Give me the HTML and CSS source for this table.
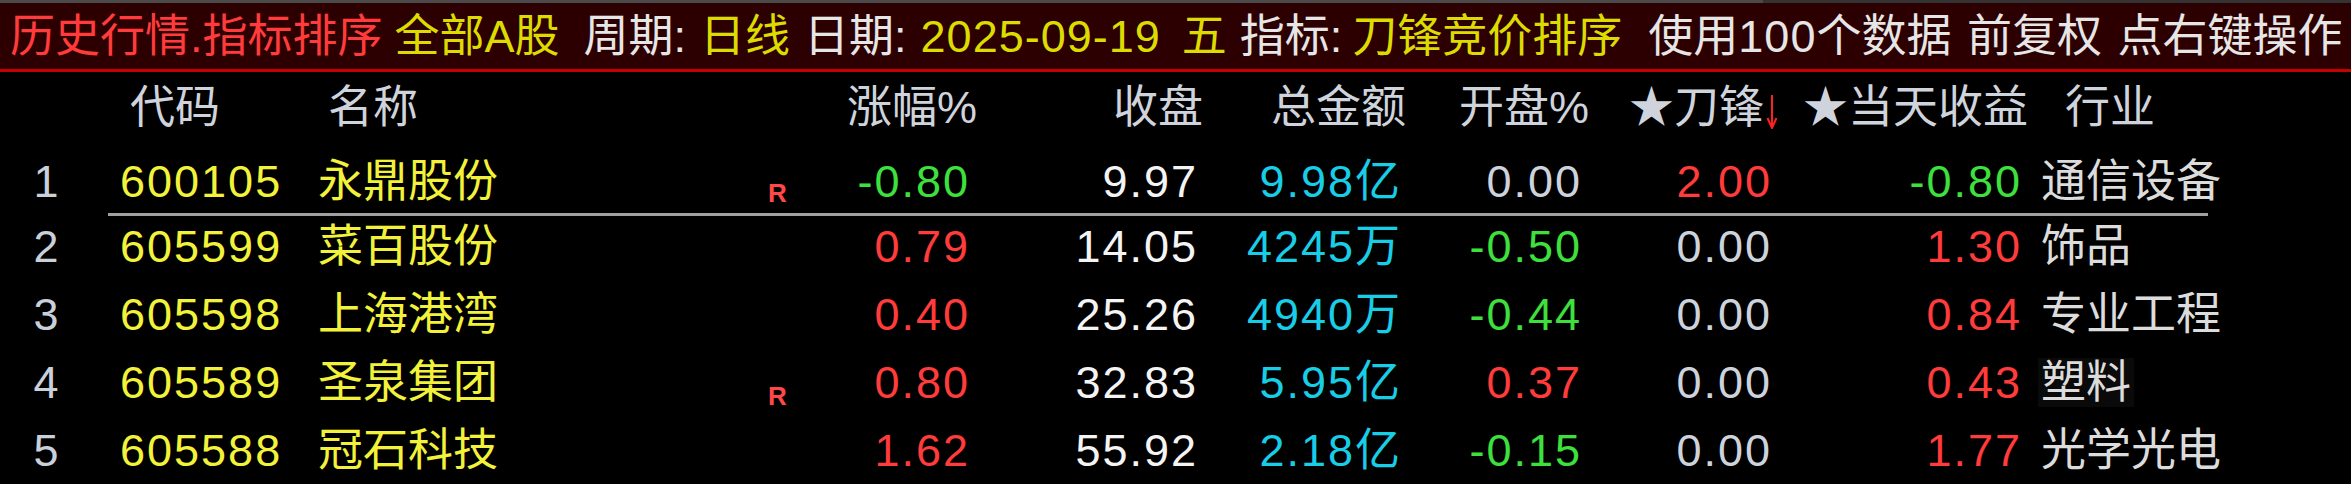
FILE: index.html
```html
<!DOCTYPE html>
<html lang="zh-CN">
<head>
<meta charset="utf-8">
<title>历史行情.指标排序</title>
<link rel="stylesheet" href="styles.css">
</head>
<body>
<div class="app">
  <div class="topstrip"></div>
  <div class="titlebar">
    <span class="t-red">历史行情.指标排序</span>
    <span class="t-yel seg-market">全部A股</span>
    <span class="t-wht seg-period-label">周期:</span>
    <span class="t-yel seg-period">日线</span>
    <span class="t-wht seg-date-label">日期:</span>
    <span class="t-yel t-num seg-date">2025-09-19</span>
    <span class="t-yel seg-week">五</span>
    <span class="t-wht seg-ind-label">指标:</span>
    <span class="t-yel seg-ind">刀锋竞价排序</span>
    <span class="t-wht seg-tail">使用<span class="t-num">100</span>个数据 前复权 点右键操作</span>
  </div>

  <div class="hrow">
    <span></span>
    <span class="h-code">代码</span>
    <span class="h-name">名称</span>
    <span></span>
    <span class="h-num">涨幅%</span>
    <span class="h-num">收盘</span>
    <span class="h-num">总金额</span>
    <span class="h-num">开盘%</span>
    <span class="h-num">★刀锋<svg class="sort-arrow" width="12" height="34" viewBox="0 0 12 34"><line x1="6" y1="0" x2="6" y2="31" stroke="#ff2020" stroke-width="2"/><path d="M1.5 23 L6 33 L10.5 23" fill="none" stroke="#ff2020" stroke-width="2"/></svg></span>
    <span class="h-num">★当天收益</span>
    <span class="h-ind">行业</span>
  </div>

  <div class="row row-first">
    <span class="idx">1</span>
    <span class="code">600105</span>
    <span class="name">永鼎股份</span>
    <span class="mark">R</span>
    <span class="num green">-0.80</span>
    <span class="num white">9.97</span>
    <span class="num cyan">9.98亿</span>
    <span class="num gray">0.00</span>
    <span class="num red">2.00</span>
    <span class="num green">-0.80</span>
    <span class="ind">通信设备</span>
  </div>
  <div class="sep"></div>

  <div class="row row-second">
    <span class="idx">2</span>
    <span class="code">605599</span>
    <span class="name">菜百股份</span>
    <span class="mark"></span>
    <span class="num red">0.79</span>
    <span class="num white">14.05</span>
    <span class="num cyan">4245万</span>
    <span class="num green">-0.50</span>
    <span class="num gray">0.00</span>
    <span class="num red">1.30</span>
    <span class="ind">饰品</span>
  </div>

  <div class="row">
    <span class="idx">3</span>
    <span class="code">605598</span>
    <span class="name">上海港湾</span>
    <span class="mark"></span>
    <span class="num red">0.40</span>
    <span class="num white">25.26</span>
    <span class="num cyan">4940万</span>
    <span class="num green">-0.44</span>
    <span class="num gray">0.00</span>
    <span class="num red">0.84</span>
    <span class="ind">专业工程</span>
  </div>

  <div class="row">
    <span class="idx">4</span>
    <span class="code">605589</span>
    <span class="name">圣泉集团</span>
    <span class="mark">R</span>
    <span class="num red">0.80</span>
    <span class="num white">32.83</span>
    <span class="num cyan">5.95亿</span>
    <span class="num red">0.37</span>
    <span class="num gray">0.00</span>
    <span class="num red">0.43</span>
    <span class="ind ind-hl">塑料</span>
  </div>

  <div class="row">
    <span class="idx">5</span>
    <span class="code">605588</span>
    <span class="name">冠石科技</span>
    <span class="mark"></span>
    <span class="num red">1.62</span>
    <span class="num white">55.92</span>
    <span class="num cyan">2.18亿</span>
    <span class="num green">-0.15</span>
    <span class="num gray">0.00</span>
    <span class="num red">1.77</span>
    <span class="ind">光学光电</span>
  </div>
</div>
</body>
</html>
```

FILE: styles.css
```css
* { box-sizing: border-box; }

html, body {
  margin: 0;
  padding: 0;
  background: #000;
}

body {
  width: 2351px;
  height: 484px;
  overflow: hidden;
  font-family: "Liberation Sans", "Noto Sans CJK SC", sans-serif;
  font-size: 45px;
  line-height: 1;
}

.app {
  display: flex;
  flex-direction: column;
  width: 2351px;
}

.topstrip {
  height: 3px;
  background: linear-gradient(to right, #4a4a4a 0, #4a4a4a 75%, #333 75%, #333 100%);
}

.titlebar {
  height: 69px;
  background: #2c0000;
  border-bottom: 3px solid #c80000;
  display: flex;
  align-items: center;
  padding-left: 10px;
  white-space: nowrap;
  overflow: hidden;
  word-spacing: 3px;
}

.t-red { color: #ff3b3b; }
.t-yel { color: #dcdc00; }
.t-wht { color: #e6e6e6; }
.t-num { letter-spacing: 1px; }

.seg-market { margin-left: 12px; }
.seg-period-label { margin-left: 24px; }
.seg-period { margin-left: 14px; }
.seg-date-label { margin-left: 14px; }
.seg-date { margin-left: 14px; }
.seg-week { margin-left: 21px; }
.seg-ind-label { margin-left: 13px; }
.seg-ind { margin-left: 10px; }
.seg-tail { margin-left: 26px; }

/* header row */
.hrow {
  height: 71px;
  display: grid;
  grid-template-columns: 92px 218px 430px 60px 177px 226px 203px 183px 189px 250px 1fr;
  align-items: center;
  color: #cfd4dc;
  white-space: nowrap;
}

.h-code { padding-left: 38px; }
.h-name { padding-left: 18px; }
.h-num { justify-self: end; display: flex; align-items: center; }
.h-ind { padding-left: 37px; }

.sort-arrow {
  margin-left: 2px;
  margin-top: 8px;
}

/* data rows */
.row {
  height: 68px;
  display: grid;
  grid-template-columns: 92px 218px 430px 60px 168px 228px 204px 180px 190px 250px 1fr;
  align-items: center;
  white-space: nowrap;
}

.row-first {
  height: 70px;
  padding-top: 6px;
}

.row-second {
  height: 64px;
  padding-bottom: 4px;
}

.sep {
  height: 3px;
  width: 2100px;
  margin-left: 108px;
  background: #a0a0a0;
}

.idx {
  text-align: center;
  color: #c9d0da;
}

.code {
  padding-left: 28px;
  color: #f2f23a;
  letter-spacing: 2px;
}

.name {
  padding-left: 8px;
  color: #f2f23a;
}

.mark {
  align-self: end;
  margin-bottom: 7px;
  padding-left: 28px;
  font-size: 26px;
  line-height: 26px;
  font-weight: bold;
  color: #ff4848;
}

.num {
  justify-self: end;
  letter-spacing: 2px;
  margin-right: -2px;
}

.green { color: #3ee03e; }
.red { color: #ff3b3b; }
.white { color: #f4f4f4; }
.cyan { color: #18cde6; }
.gray { color: #cdd3dc; }

.ind {
  padding-left: 21px;
  color: #dcdcdc;
}

.ind-hl {
  justify-self: start;
  margin-left: 18px;
  padding: 2px 3px;
  background: #0a0a0a;
}
```
